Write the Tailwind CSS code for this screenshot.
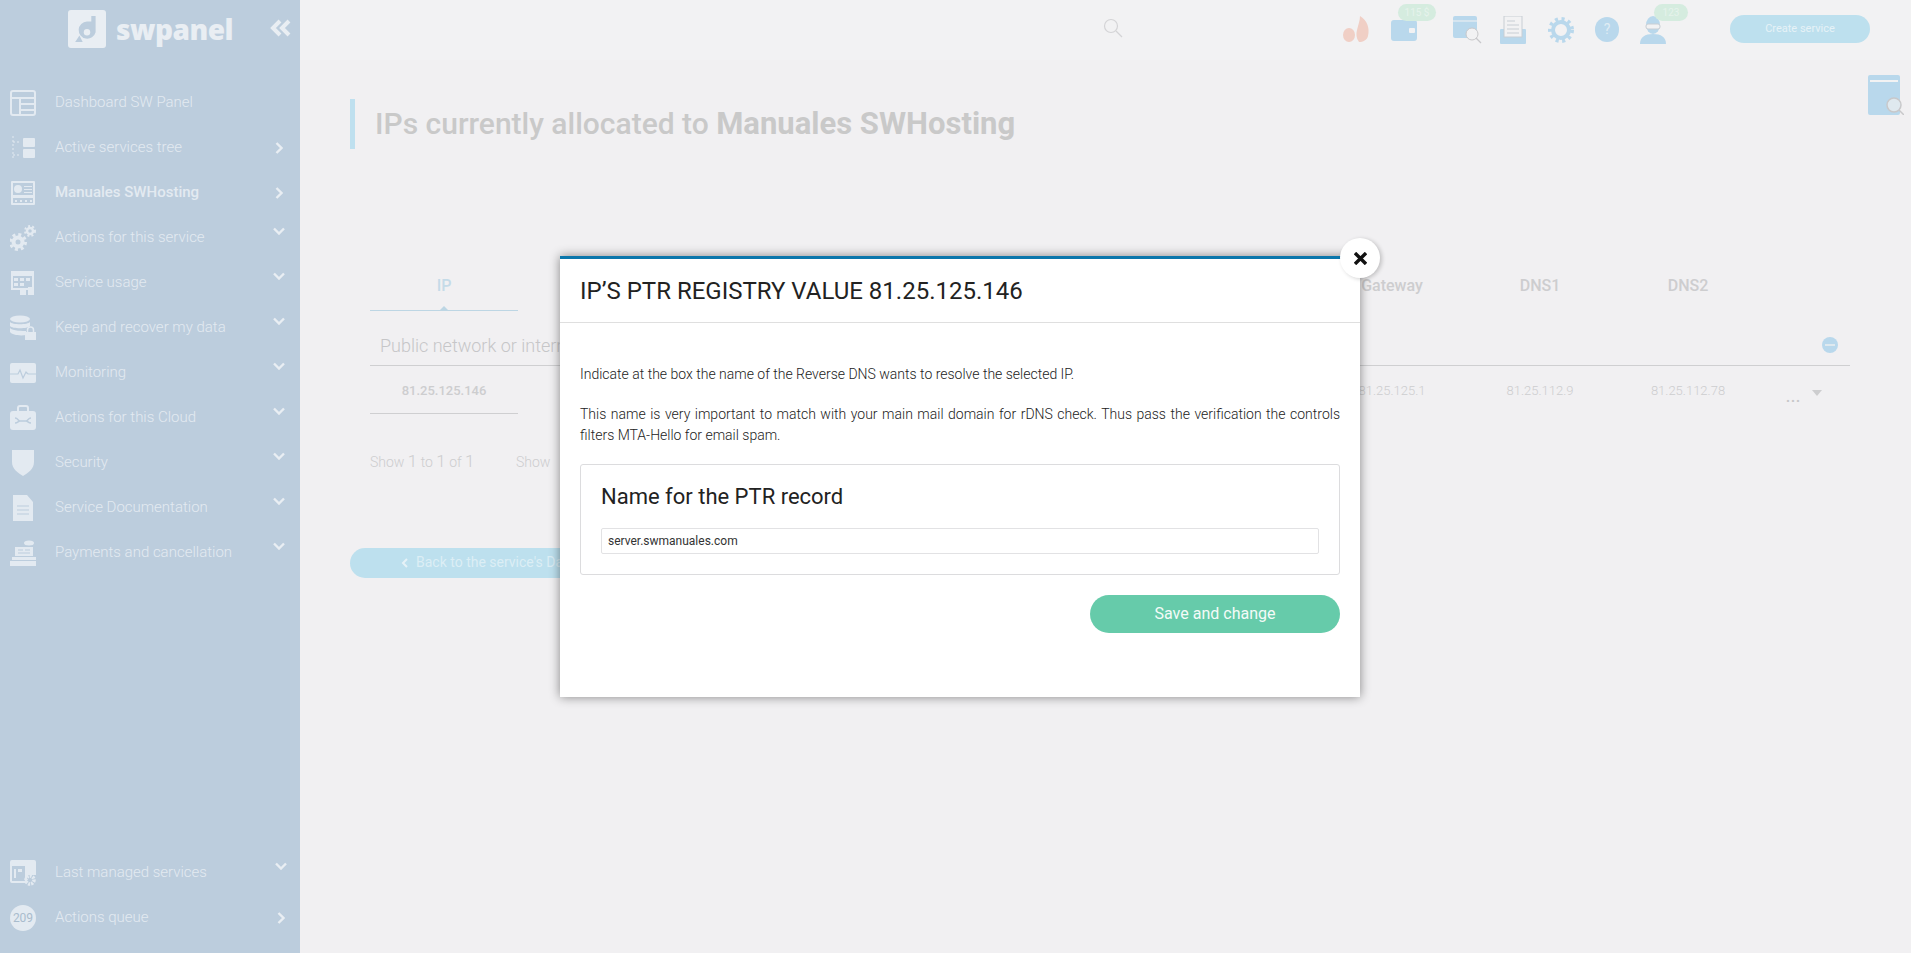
<!DOCTYPE html>
<html lang="en">
<head>
  <meta charset="utf-8" />
  <meta name="viewport" content="width=device-width, initial-scale=1" />
  <title>SW Panel</title>
  <script src="https://cdn.jsdelivr.net/npm/@tailwindcss/browser@4"></script>
</head>
<body class="bg-[#f1f0f2] font-['Roboto',sans-serif]">
  <div class="relative flex h-[953px] w-[1911px] overflow-hidden">

    <!-- Sidebar -->
    <aside class="flex w-[300px] shrink-0 flex-col bg-[#bccddd] pb-[13px] text-[15px] font-light text-[#e3eaf1]">
      <div class="flex h-[80px] items-start pt-[10px]">
        <div class="ml-[68px] flex h-[38px] w-[38px] items-center justify-center rounded-[3px] bg-[#e9eef3]">
          <svg class="h-[28px] w-[28px]" viewBox="0 0 26 26" fill="#bccddd"><path d="M17 1h4v15a8 8 0 1 1-8-10h4z"/><circle cx="13" cy="16" r="3" fill="#e9eef3"/><path d="M2 25l4-6 3 6z"/></svg>
        </div>
        <span class="ml-[10px] mt-[2px] font-['Open_Sans',sans-serif] text-[28px] leading-[34px] font-extrabold tracking-[-0.5px] text-[#e9eef3]">swpanel</span>
        <svg class="ml-[36px] mt-[8px] h-[20px] w-[23px]" viewBox="0 0 23 20" fill="none" stroke="#e9eef3" stroke-width="4"><path d="M11 3 4 10l7 7M20 3l-7 7 7 7"/></svg>
      </div>

      <nav class="flex flex-col">
        <a class="flex h-[45px] items-center pl-[10px]">
          <svg class="h-[26px] w-[26px] shrink-0" viewBox="0 0 26 26" fill="none" stroke="#e3eaf1" stroke-width="2"><rect x="1" y="1" width="24" height="24" rx="2"/><path d="M1 8h24M10 8v17M10 14h15M10 20h15"/></svg>
          <span class="ml-[19px] flex-1">Dashboard SW Panel</span>
        </a>
        <a class="flex h-[45px] items-center pl-[10px]">
          <svg class="h-[26px] w-[26px] shrink-0" viewBox="0 0 26 26" fill="#e3eaf1"><rect x="13" y="3" width="12" height="9" rx="1"/><rect x="13" y="14" width="12" height="9" rx="1"/><path d="M3 1v22M3 7h8M3 20h8" fill="none" stroke="#e3eaf1" stroke-dasharray="2 2"/></svg>
          <span class="ml-[19px] flex-1">Active services tree</span>
          <svg class="mr-[17px] h-[12px] w-[8px]" viewBox="0 0 8 12" fill="none" stroke="#e9eef3" stroke-width="2.400"><path d="m1.500 1 5 5-5 5"/></svg>
        </a>
        <a class="flex h-[45px] items-center pl-[10px]">
          <svg class="h-[26px] w-[26px] shrink-0" viewBox="0 0 26 26" fill="#e3eaf1"><path fill-rule="evenodd" d="M2 1h22a1 1 0 0 1 1 1v22a1 1 0 0 1-1 1H2a1 1 0 0 1-1-1V2a1 1 0 0 1 1-1zm1 2v12h20V3zm0 15v5h20v-5z"/><circle cx="8" cy="9" r="4"/><path d="M14 6h8v1h-8zM14 9h8v1h-8zM14 12h8v1h-8zM5 20h2v2H5zM10 20h2v2h-2zM15 20h2v2h-2zM20 20h2v2h-2z"/></svg>
          <span class="ml-[19px] flex-1 font-medium">Manuales SWHosting</span>
          <svg class="mr-[17px] h-[12px] w-[8px]" viewBox="0 0 8 12" fill="none" stroke="#e9eef3" stroke-width="2.400"><path d="m1.500 1 5 5-5 5"/></svg>
        </a>
        <a class="flex h-[45px] items-center pl-[10px]">
          <svg class="h-[26px] w-[26px] shrink-0" viewBox="0 0 26 26" fill="none" stroke="#e3eaf1"><circle cx="8" cy="17" r="4.500" stroke-width="4"/><circle cx="8" cy="17" r="7.500" stroke-width="3" stroke-dasharray="3 2.900"/><circle cx="20" cy="6" r="3" stroke-width="2.500"/><circle cx="20" cy="6" r="5" stroke-width="2" stroke-dasharray="2 2.200"/></svg>
          <span class="ml-[19px] flex-1">Actions for this service</span>
          <svg class="mb-[13px] mr-[15px] h-[8px] w-[12px]" viewBox="0 0 12 8" fill="none" stroke="#e9eef3" stroke-width="2.400"><path d="m1 1.500 5 5 5-5"/></svg>
        </a>
        <a class="flex h-[45px] items-center pl-[10px]">
          <svg class="h-[26px] w-[26px] shrink-0" viewBox="0 0 26 26" fill="#e3eaf1"><path fill-rule="evenodd" d="M1 1h23v19H1zm2 5v12h19V6zM4 8h4v3H4zm6 0h4v3h-4zm6 0h4v3h-4zM4 13h4v3H4zm6 0h4v3h-4z"/><path d="M10 19h6v6h-6zM18 17h6v8h-6z"/></svg>
          <span class="ml-[19px] flex-1">Service usage</span>
          <svg class="mb-[13px] mr-[15px] h-[8px] w-[12px]" viewBox="0 0 12 8" fill="none" stroke="#e9eef3" stroke-width="2.400"><path d="m1 1.500 5 5 5-5"/></svg>
        </a>
        <a class="flex h-[45px] items-center pl-[10px]">
          <svg class="h-[26px] w-[26px] shrink-0" viewBox="0 0 26 26" fill="#e3eaf1"><ellipse cx="10" cy="4" rx="10" ry="3.500"/><path d="M0 7c2 3 18 3 20 0v4c-2 3-18 3-20 0zM0 13c2 3 14 3 16 3v4c-6 1-14 0-16-3z"/><path d="M15 17h11v8H15z"/><path d="M17.500 17v-2a3 3 0 0 1 6 0v2" fill="none" stroke="#e3eaf1" stroke-width="1.500"/></svg>
          <span class="ml-[19px] flex-1">Keep and recover my data</span>
          <svg class="mb-[13px] mr-[15px] h-[8px] w-[12px]" viewBox="0 0 12 8" fill="none" stroke="#e9eef3" stroke-width="2.400"><path d="m1 1.500 5 5 5-5"/></svg>
        </a>
        <a class="flex h-[45px] items-center pl-[10px]">
          <svg class="h-[26px] w-[26px] shrink-0" viewBox="0 0 26 26" fill="#e3eaf1"><rect y="3" width="26" height="20" rx="2"/><path d="M0 14h8l2-4 3 8 3-6 2 2h8" fill="none" stroke="#bccddd" stroke-width="1.200"/></svg>
          <span class="ml-[19px] flex-1">Monitoring</span>
          <svg class="mb-[13px] mr-[15px] h-[8px] w-[12px]" viewBox="0 0 12 8" fill="none" stroke="#e9eef3" stroke-width="2.400"><path d="m1 1.500 5 5 5-5"/></svg>
        </a>
        <a class="flex h-[45px] items-center pl-[10px]">
          <svg class="h-[26px] w-[26px] shrink-0" viewBox="0 0 26 26" fill="#e3eaf1"><rect y="6" width="26" height="19" rx="3"/><path d="M8 6V3a2 2 0 0 1 2-2h6a2 2 0 0 1 2 2v3" fill="none" stroke="#e3eaf1" stroke-width="2"/><path d="M5 13c3 0 3 3 5 3h6c2 0 2-3 5-3M5 18c3 0 3-2 5-2M21 18c-3 0-3-2-5-2" fill="none" stroke="#bccddd" stroke-width="1.500"/></svg>
          <span class="ml-[19px] flex-1">Actions for this Cloud</span>
          <svg class="mb-[13px] mr-[15px] h-[8px] w-[12px]" viewBox="0 0 12 8" fill="none" stroke="#e9eef3" stroke-width="2.400"><path d="m1 1.500 5 5 5-5"/></svg>
        </a>
        <a class="flex h-[45px] items-center pl-[10px]">
          <svg class="h-[26px] w-[26px] shrink-0" viewBox="0 0 26 26" fill="#e3eaf1"><path d="M2 0h22v12c0 7-6 11-11 14C8 23 2 19 2 12z"/></svg>
          <span class="ml-[19px] flex-1">Security</span>
          <svg class="mb-[13px] mr-[15px] h-[8px] w-[12px]" viewBox="0 0 12 8" fill="none" stroke="#e9eef3" stroke-width="2.400"><path d="m1 1.500 5 5 5-5"/></svg>
        </a>
        <a class="flex h-[45px] items-center pl-[10px]">
          <svg class="h-[26px] w-[26px] shrink-0" viewBox="0 0 26 26" fill="#e3eaf1"><path d="M3 0h14l6 7v19H3z"/><path d="M7 11h12M7 15h12M7 19h12" stroke="#bccddd"/></svg>
          <span class="ml-[19px] flex-1">Service Documentation</span>
          <svg class="mb-[13px] mr-[15px] h-[8px] w-[12px]" viewBox="0 0 12 8" fill="none" stroke="#e9eef3" stroke-width="2.400"><path d="m1 1.500 5 5 5-5"/></svg>
        </a>
        <a class="flex h-[45px] items-center pl-[10px]">
          <svg class="h-[26px] w-[26px] shrink-0" viewBox="0 0 26 26" fill="#e3eaf1"><ellipse cx="19" cy="3" rx="5" ry="2.500"/><path d="M5 7h18v9H5zM2 17h24v3H2zM0 21h26v5H0z"/><path d="M8 10h5M15 10h5M8 13h12" stroke="#bccddd"/></svg>
          <span class="ml-[19px] flex-1">Payments and cancellation</span>
          <svg class="mb-[13px] mr-[15px] h-[8px] w-[12px]" viewBox="0 0 12 8" fill="none" stroke="#e9eef3" stroke-width="2.400"><path d="m1 1.500 5 5 5-5"/></svg>
        </a>
      </nav>

      <nav class="mt-auto flex flex-col">
        <a class="flex h-[45px] items-center pl-[10px]">
          <svg class="h-[26px] w-[26px] shrink-0" viewBox="0 0 26 26" fill="#e3eaf1"><path fill-rule="evenodd" d="M2 0h22a2 2 0 0 1 2 2v13h-9v8H2a2 2 0 0 1-2-2V2a2 2 0 0 1 2-2zm0 6v15h13V6z"/><path d="M4 9h2v9H4zM8 9h4v3H8z"/><circle cx="20" cy="20" r="4" fill="none" stroke="#e3eaf1" stroke-width="3.500" stroke-dasharray="2 1"/></svg>
          <span class="ml-[19px] flex-1">Last managed services</span>
          <svg class="mb-[13px] mr-[13px] h-[8px] w-[12px]" viewBox="0 0 12 8" fill="none" stroke="#e9eef3" stroke-width="2.400"><path d="m1 1.500 5 5 5-5"/></svg>
        </a>
        <a class="flex h-[45px] items-center pl-[10px]">
          <span class="flex h-[26px] w-[26px] shrink-0 items-center justify-center rounded-full bg-[#e3eaf1] text-[12px] font-normal text-[#a9bccd]">209</span>
          <span class="ml-[19px] flex-1">Actions queue</span>
          <svg class="mr-[15px] h-[12px] w-[8px]" viewBox="0 0 8 12" fill="none" stroke="#e9eef3" stroke-width="2.400"><path d="m1.500 1 5 5-5 5"/></svg>
        </a>
      </nav>
    </aside>

    <!-- Main -->
    <main class="relative flex-1">
      <!-- Top bar -->
      <header class="flex h-[60px] items-start bg-[#f2f2f3] pt-[15px]">
        <svg class="ml-[803px] mt-[3px] h-[20px] w-[20px]" viewBox="0 0 20 20" fill="none" stroke="#d4d4d6" stroke-width="1.200"><circle cx="8" cy="8" r="6.500"/><path d="m13 13 6 6"/></svg>
        <svg class="ml-[219px] mt-[1px] h-[26px] w-[28px]" viewBox="0 0 28 26" fill="#f0cfc5"><path d="M18 0c7 4 10 12 8 20-1 4-5 6-9 6-3-4-3-8-2-12 1-5 3-9 3-14z"/><ellipse cx="7" cy="19" rx="6" ry="7"/></svg>
        <div class="relative ml-[21px] mt-[5px] h-[21px] w-[26px] rounded-[3px] bg-[#b9d8ec]">
          <span class="absolute right-[2px] top-[8px] h-[5px] w-[6px] rounded-[1px] bg-[#f2f2f3]"></span>
          <span class="absolute -right-[19px] -top-[16px] flex h-[17px] w-[38px] items-center justify-center rounded-full bg-[#d5ecdf] text-[10px] text-[#e6f3ec]">115 $</span>
        </div>
        <svg class="ml-[35px] mt-[-1px] h-[30px] w-[30px]" viewBox="0 0 30 30"><rect x="1" y="2" width="24" height="22" rx="2" fill="#b9d8ec"/><path d="M1 7h24" stroke="#f2f2f3"/><circle cx="20" cy="20" r="6" fill="#f2f2f3" stroke="#c8c8ca"/><path d="m24 24 5 5" stroke="#c8c8ca" stroke-width="1.200"/></svg>
        <svg class="ml-[18px] mt-[1px] h-[28px] w-[26px]" viewBox="0 0 26 28"><rect y="13" width="26" height="15" rx="1" fill="#b9d8ec"/><rect x="4" width="18" height="21" fill="#f2f2f3" stroke="#c8ced4"/><path d="M7 5h8M7 9h12M7 13h12M7 17h12" stroke="#c8ced4"/></svg>
        <svg class="ml-[22px] mt-[1px] h-[28px] w-[26px]" viewBox="0 0 26 28" fill="none" stroke="#b9d8ec"><circle cx="13" cy="14" r="8" stroke-width="4"/><circle cx="13" cy="14" r="11" stroke-width="4" stroke-dasharray="3 3.500"/></svg>
        <span class="ml-[21px] mt-[2px] flex h-[25px] w-[24px] items-center justify-center rounded-full bg-[#b9d8ec] text-[14px] text-[#e0ecf3]">?</span>
        <div class="relative ml-[21px] mt-[1px] h-[28px] w-[26px]">
          <svg class="h-[28px] w-[26px]" viewBox="0 0 26 28" fill="#b9d8ec"><ellipse cx="13" cy="9" rx="7" ry="9"/><path d="M0 28c0-7 5-10 13-10s13 3 13 10z"/><rect x="6" y="8" width="14" height="5" rx="2" fill="#f2f2f3" stroke="#c8ced4"/></svg>
          <span class="absolute -right-[22px] -top-[12px] flex h-[17px] w-[34px] items-center justify-center rounded-full bg-[#d5ecdf] text-[10px] text-[#e6f3ec]">123</span>
        </div>
        <button class="ml-[64px] h-[28px] w-[140px] rounded-full bg-[#bde0ee] text-[11px] text-[#e6f2f7]">Create service</button>
      </header>

      <!-- Book icon -->
      <svg class="absolute right-[7px] top-[75px] h-[40px] w-[36px]" viewBox="0 0 36 40"><rect width="32" height="40" rx="2" fill="#b9d8ec"/><path d="M2 6h28" stroke="#f2f2f3" stroke-width="2"/><circle cx="26" cy="30" r="7" fill="#dfe9ef" stroke="#c8c8ca" stroke-width="1.500"/><path d="m31 35 5 5" stroke="#c8c8ca" stroke-width="1.500"/></svg>

      <!-- Title -->
      <div class="ml-[50px] mt-[39px] flex h-[50px] items-center border-l-[5px] border-[#bfe0ef] pl-[20px]">
        <h1 class="text-[30px] font-medium text-[#c9c9c9]">IPs currently allocated to <span class="text-[31px] font-bold">Manuales SWHosting</span></h1>
      </div>

      <!-- Table -->
      <section class="ml-[70px] mt-[118px] w-[1480px]">
        <div class="flex h-[44px] items-start pt-[7px] text-[16px] font-medium text-[#cdcdcf]">
          <div class="relative h-[37px] w-[148px] border-b-[1.500px] border-[#bdd6e4] text-center text-[#c5dbe8]">IP
            <span class="absolute bottom-0 left-[70px] h-0 w-0 border-x-[4px] border-b-[4px] border-x-transparent border-b-[#bdd6e4]"></span>
          </div>
          <div class="flex-1"></div>
          <div class="w-[148px] text-center">Gateway</div>
          <div class="w-[148px] text-center">DNS1</div>
          <div class="w-[148px] text-center">DNS2</div>
          <div class="w-[88px]"></div>
        </div>
        <div class="flex h-[55px] items-center justify-between border-b border-[#cfcfd1] pl-[10px] pr-[12px] pt-[14px] text-[18px] font-light text-[#c6c6c8]">
          <span>Public network or internet</span>
          <span class="flex h-[16px] w-[16px] items-center justify-center rounded-full bg-[#b9d8ec]"><span class="h-[2px] w-[10px] bg-[#dfe9ef]"></span></span>
        </div>
        <div class="flex h-[48px] items-start pt-[15px] text-[13px] font-light text-[#cdcdcf]">
          <div class="h-[33px] w-[148px] border-b border-[#cfcfd1] text-center font-medium">81.25.125.146</div>
          <div class="flex-1"></div>
          <div class="w-[148px] text-center">81.25.125.1</div>
          <div class="w-[148px] text-center">81.25.112.9</div>
          <div class="w-[148px] text-center">81.25.112.78</div>
          <div class="flex w-[88px] items-start pl-[24px]">
            <span class="mt-[9px] text-[14px] leading-[14px] font-bold tracking-[1px] text-[#c6c6c8]">...</span>
            <span class="ml-[11px] mt-[9px] h-0 w-0 border-x-[5px] border-t-[6px] border-x-transparent border-t-[#cdcdcf]"></span>
          </div>
        </div>
        <div class="mt-[35px] flex items-baseline text-[14px] font-light text-[#cdcdcf]">
          <span class="w-[146px]">Show <span class="text-[17px]">1</span> to <span class="text-[17px]">1</span> of <span class="text-[17px]">1</span></span>
          <span>Show</span>
        </div>
      </section>

      <button class="ml-[50px] mt-[73px] flex h-[30px] w-[300px] items-center rounded-full bg-[#bde0ee] pl-[51px] text-[14px] text-[#dceef5]">
        <svg class="mr-[8px] h-[10px] w-[7px]" viewBox="0 0 7 10" fill="none" stroke="#e6f2f7" stroke-width="2"><path d="M6 1 2 5l4 4"/></svg>
        Back to the service's Dashboard
      </button>
    </main>

    <!-- Modal -->
    <div class="absolute left-[560px] top-[256px] h-[441px] w-[800px] border-t-[3px] border-[#0a76ab] bg-white text-[#222] shadow-[0_0_10px_rgba(0,0,0,0.45)]">
      <button class="absolute -right-[20px] -top-[21px] flex h-[40px] w-[40px] items-center justify-center rounded-full bg-white shadow-[2px_1px_4px_rgba(0,0,0,0.2)]">
        <svg class="h-[13px] w-[13px]" viewBox="0 0 13 13" fill="none" stroke="#111" stroke-width="3.400"><path d="m1 1 11 11M12 1 1 12"/></svg>
      </button>
      <div class="flex h-[64px] items-center border-b border-[#dfdfdf] px-[20px]">
        <h2 class="text-[24px] text-[#222]">IP’S PTR REGISTRY VALUE 81.25.125.146</h2>
      </div>
      <div class="px-[20px] pt-[41px]">
        <p class="text-[14px] leading-[21px] font-light">Indicate at the box the name of the Reverse DNS wants to resolve the selected IP.</p>
        <p class="mt-[19px] text-justify text-[14px] leading-[21px] font-light">This name is very important to match with your main mail domain for rDNS check. Thus pass the verification the controls filters MTA-Hello for email spam.</p>
        <div class="mt-[18px] h-[111px] rounded-[3px] border border-[#dcdcde] px-[20px] pt-[20px]">
          <h3 class="text-[22px] leading-[24px]">Name for the PTR record</h3>
          <input class="mt-[19px] h-[26px] w-full rounded-[2px] border border-[#e2e2e4] px-[6px] text-[12px] text-[#333]" value="server.swmanuales.com" />
        </div>
        <div class="mt-[20px] flex justify-end">
          <button class="h-[38px] w-[250px] rounded-full bg-[#66cbaa] text-[16px] text-[#f4fbf8]">Save and change</button>
        </div>
      </div>
    </div>
  </div>
</body>
</html>
